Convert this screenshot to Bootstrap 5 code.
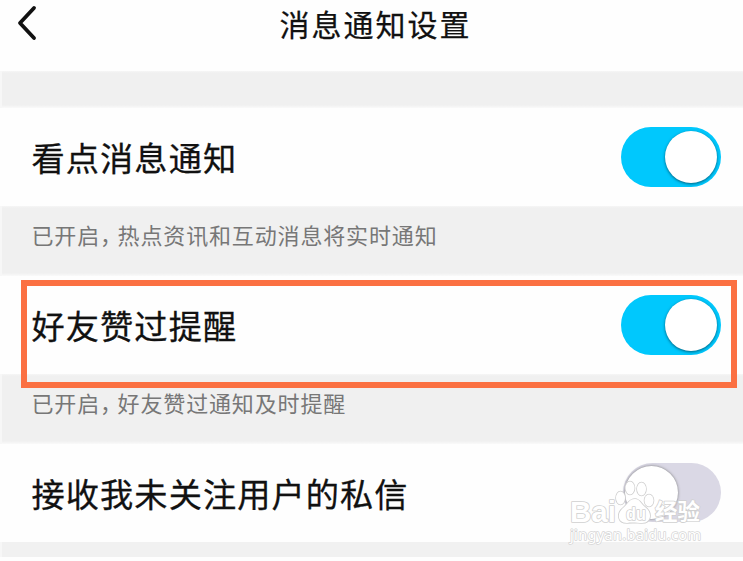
<!DOCTYPE html>
<html lang="zh-CN">
<head>
<meta charset="utf-8">
<meta name="viewport" content="width=device-width, initial-scale=1">
<title>消息通知设置</title>
<link href="https://cdn.jsdelivr.net/npm/bootstrap@5.3.0/dist/css/bootstrap.min.css" rel="stylesheet">
<style>
  body { font-family: "Noto Sans CJK SC", sans-serif; color: #111; background: #fefefe; height: 561px; }
  .topbar { height: 70.500px; }
  .back { width: 24px; height: 38px; margin: 4px 0 0 15px; }
  .page-title { font-size: 30px; letter-spacing: 2px; line-height: 40px; padding-top: 3px; padding-left: 8px; -webkit-text-stroke: .25px #111; }
  .band { background: linear-gradient(#f6f6f6, #f0f0f0 2px, #f0f0f0 calc(100% - 3px), #fafafa); border-left: 2px solid #f7f7f7; padding-left: 29.500px; color: #777; font-size: 22px; letter-spacing: .85px; line-height: 30px; }
  .band-gap { height: 37.500px; }
  .band-note { height: 70px; padding-top: 13px; }
  .band-end { height: 15px; background: #f1f1f1; }
  .comma { letter-spacing: -4.500px; }
  .setting { height: 98px; padding: 0 22px 0 31.500px; }
  .setting-label { font-size: 33.2px; letter-spacing: 1.1px; line-height: 44px; -webkit-text-stroke: .3px #111; }
  .toggle { width: 100px; height: 60px; background: #00c8fd; padding: 4px; margin-bottom: 1px; }
  .knob { width: 52px; height: 52px; background: #fff; box-shadow: 0 1px 3px rgba(0,50,70,.7); }
  .toggle.off { background: #dad8e5; width: 98px; height: 59px; padding: 3px 2px; }
  .toggle.off .knob { width: 53px; height: 53px; box-shadow: 0 0 3px #777; }
  .highlight { left: 21px; top: 280px; width: 716px; height: 108px; border: 6px solid #fb7042; }
  .watermark { left: 560px; top: 475px; }
</style>
</head>
<body class="position-relative overflow-hidden m-0">
<header class="topbar position-relative d-flex align-items-start">
  <svg class="back" viewBox="0 0 24 38" aria-label="返回"><path d="M19 4 5 19 19 34" fill="none" stroke="#111" stroke-width="3.800" stroke-linecap="round" stroke-linejoin="round"/></svg>
  <h1 class="page-title position-absolute start-0 end-0 text-center fw-normal m-0">消息通知设置</h1>
</header>
<div class="band band-gap"></div>
<main>
  <div class="setting d-flex align-items-center justify-content-between">
    <span class="setting-label">看点消息通知</span>
    <span class="toggle rounded-pill d-flex justify-content-end" role="switch" aria-checked="true"><span class="knob rounded-circle"></span></span>
  </div>
  <div class="band band-note">已开启<span class="comma">，</span>热点资讯和互动消息将实时通知</div>
  <div class="setting d-flex align-items-center justify-content-between">
    <span class="setting-label">好友赞过提醒</span>
    <span class="toggle rounded-pill d-flex justify-content-end" role="switch" aria-checked="true"><span class="knob rounded-circle"></span></span>
  </div>
  <div class="band band-note">已开启<span class="comma">，</span>好友赞过通知及时提醒</div>
  <div class="setting d-flex align-items-center justify-content-between">
    <span class="setting-label">接收我未关注用户的私信</span>
    <span class="toggle off rounded-pill d-flex" role="switch" aria-checked="false"><span class="knob rounded-circle"></span></span>
  </div>
  <div class="band band-end"></div>
</main>
<div class="highlight position-absolute"></div>
<svg class="watermark position-absolute" width="150" height="72" viewBox="0 0 150 72">
  <g fill="#fff" stroke="#d0d0d0" stroke-width="1.600" paint-order="stroke" stroke-linejoin="round">
    <ellipse cx="60.500" cy="23" rx="4.500" ry="6.500"/>
    <ellipse cx="70" cy="13" rx="4.500" ry="6.500"/>
    <ellipse cx="81.500" cy="14" rx="4.500" ry="6.500"/>
    <ellipse cx="89" cy="25.500" rx="4.500" ry="6"/>
    <path d="M75 24c5 0 6 5 10 8 8 6 6 16-3 16-4 0-10-1-15 0-9 0-11-9-4-15 5-4 6-9 12-9Z"/>
    <text x="10" y="47" font-family="Liberation Sans, sans-serif" font-size="29" font-weight="bold" textLength="46" lengthAdjust="spacingAndGlyphs">Bai</text>
    <text x="66" y="45" font-family="Liberation Sans, sans-serif" font-size="18" font-weight="bold" textLength="20" lengthAdjust="spacingAndGlyphs">du</text>
    <text x="95" y="45" font-family="Noto Sans CJK SC, sans-serif" font-size="22.500" font-weight="bold" textLength="45" lengthAdjust="spacingAndGlyphs">经验</text>
    <text x="10" y="65" font-family="Noto Sans, sans-serif" font-size="14.500" textLength="131" stroke="#d5d5d5" stroke-width="1.500">jingyan.baidu.com</text>
  </g>
</svg>
<script src="https://cdn.jsdelivr.net/npm/bootstrap@5.3.0/dist/js/bootstrap.bundle.min.js"></script>
</body>
</html>
